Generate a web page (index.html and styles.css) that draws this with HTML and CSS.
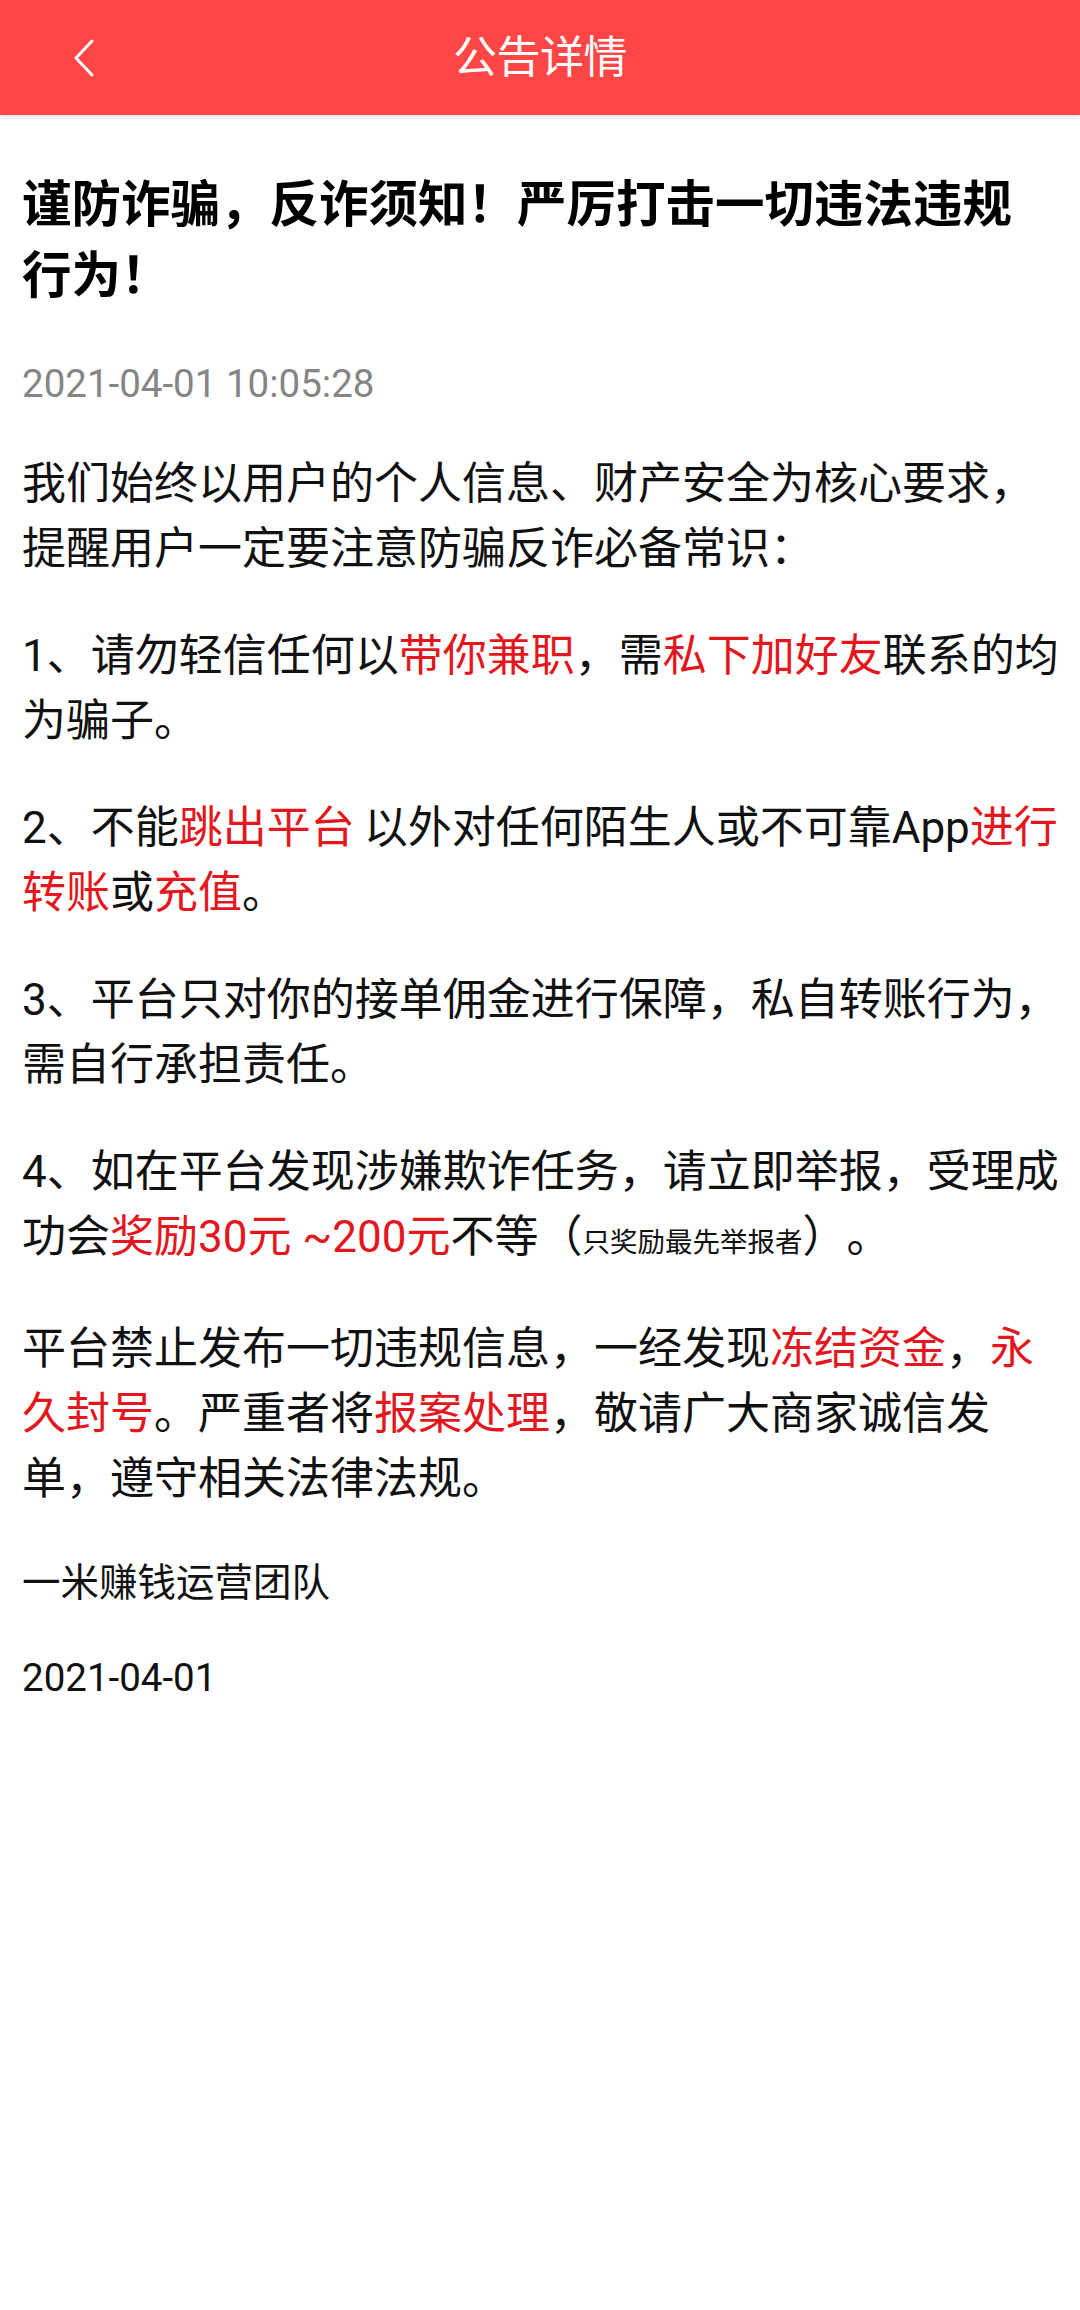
FILE: index.html
```html
<!DOCTYPE html>
<html lang="zh-CN">
<head>
<meta charset="utf-8">
<title>公告详情</title>
<link rel="stylesheet" href="styles.css">
</head>
<body>
<header class="topbar">
  <div class="topbar-left">
    <svg class="back" width="24" height="40" viewBox="0 0 24 40" aria-hidden="true">
      <path d="M20 3 L4 20 L20 37" fill="none" stroke="#ffffff" stroke-width="3" stroke-linecap="round" stroke-linejoin="round"/>
    </svg>
  </div>
  <h1 class="topbar-title">公告详情</h1>
  <div class="topbar-right"></div>
</header>
<main class="article">
  <h2 class="headline">谨防诈骗，反诈须知！严厉打击一切违法违规行为！</h2>
  <div class="time">2021-04-01 10:05:28</div>
  <p class="para first">我们始终以用户的个人信息、财产安全为核心要求，提醒用户一定要注意防骗反诈必备常识：</p>
  <p class="para">1、请勿轻信任何以<span class="hl">带你兼职</span>，需<span class="hl">私下加好友</span>联系的均为骗子。</p>
  <p class="para">2、不能<span class="hl">跳出平台</span>&thinsp;以外对任何陌生人或不可靠App<span class="hl">进行转账</span>或<span class="hl">充值</span>。</p>
  <p class="para">3、平台只对你的接单佣金进行保障，私自转账行为，需自行承担责任。</p>
  <p class="para">4、如在平台发现涉嫌欺诈任务，请立即举报，受理成功会<span class="hl">奖励30元 ~200元</span>不等（<span class="small">只奖励最先举报者</span>）。</p>
  <p class="para">平台禁止发布一切违规信息，一经发现<span class="hl">冻结资金</span>，<span class="hl">永久封号</span>。严重者将<span class="hl">报案处理</span>，敬请广大商家诚信发单，遵守相关法律法规。</p>
  <p class="sign">一米赚钱运营团队</p>
  <p class="sign date">2021-04-01</p>
</main>
</body>
</html>
```

FILE: styles.css
```css
html, body {
  margin: 0;
  padding: 0;
  background: #ffffff;
}
body {
  font-family: Roboto, "Noto Sans CJK SC", sans-serif;
  color: #111111;
  width: 1080px;
  text-spacing-trim: space-all;
}
.topbar {
  height: 115px;
  background: #fe4646;
  display: grid;
  grid-template-columns: 1fr auto 1fr;
  align-items: center;
  box-shadow: 0 2px 4px rgba(0, 0, 0, 0.12);
  position: relative;
}
.topbar-left {
  padding-left: 72px;
  display: flex;
  align-items: center;
}
.back {
  display: block;
}
.topbar-title {
  margin: 0;
  font-size: 44px;
  font-weight: 400;
  color: #ffffff;
  line-height: 1;
  letter-spacing: -0.5px;
}
.article {
  padding: 0 10px 40px 22px;
}
.headline {
  margin: 55px 0 0 0;
  padding-right: 14px;
  font-size: 49.5px;
  line-height: 71px;
  font-weight: 700;
  color: #000000;
}
.time {
  margin-top: 44px;
  font-size: 38.5px;
  line-height: 56px;
  color: #858585;
}
.para {
  margin: 42px 0 0 0;
  font-size: 44px;
  line-height: 65px;
  color: #111111;
}
.para.first {
  margin-top: 40px;
}
.hl {
  color: #e3171d;
}
.small {
  font-size: 27.5px;
}
.sign {
  margin: 43px 0 0 0;
  font-size: 38.5px;
  line-height: 56px;
  color: #111111;
}
.sign.date {
  margin-top: 39px;
}
```
